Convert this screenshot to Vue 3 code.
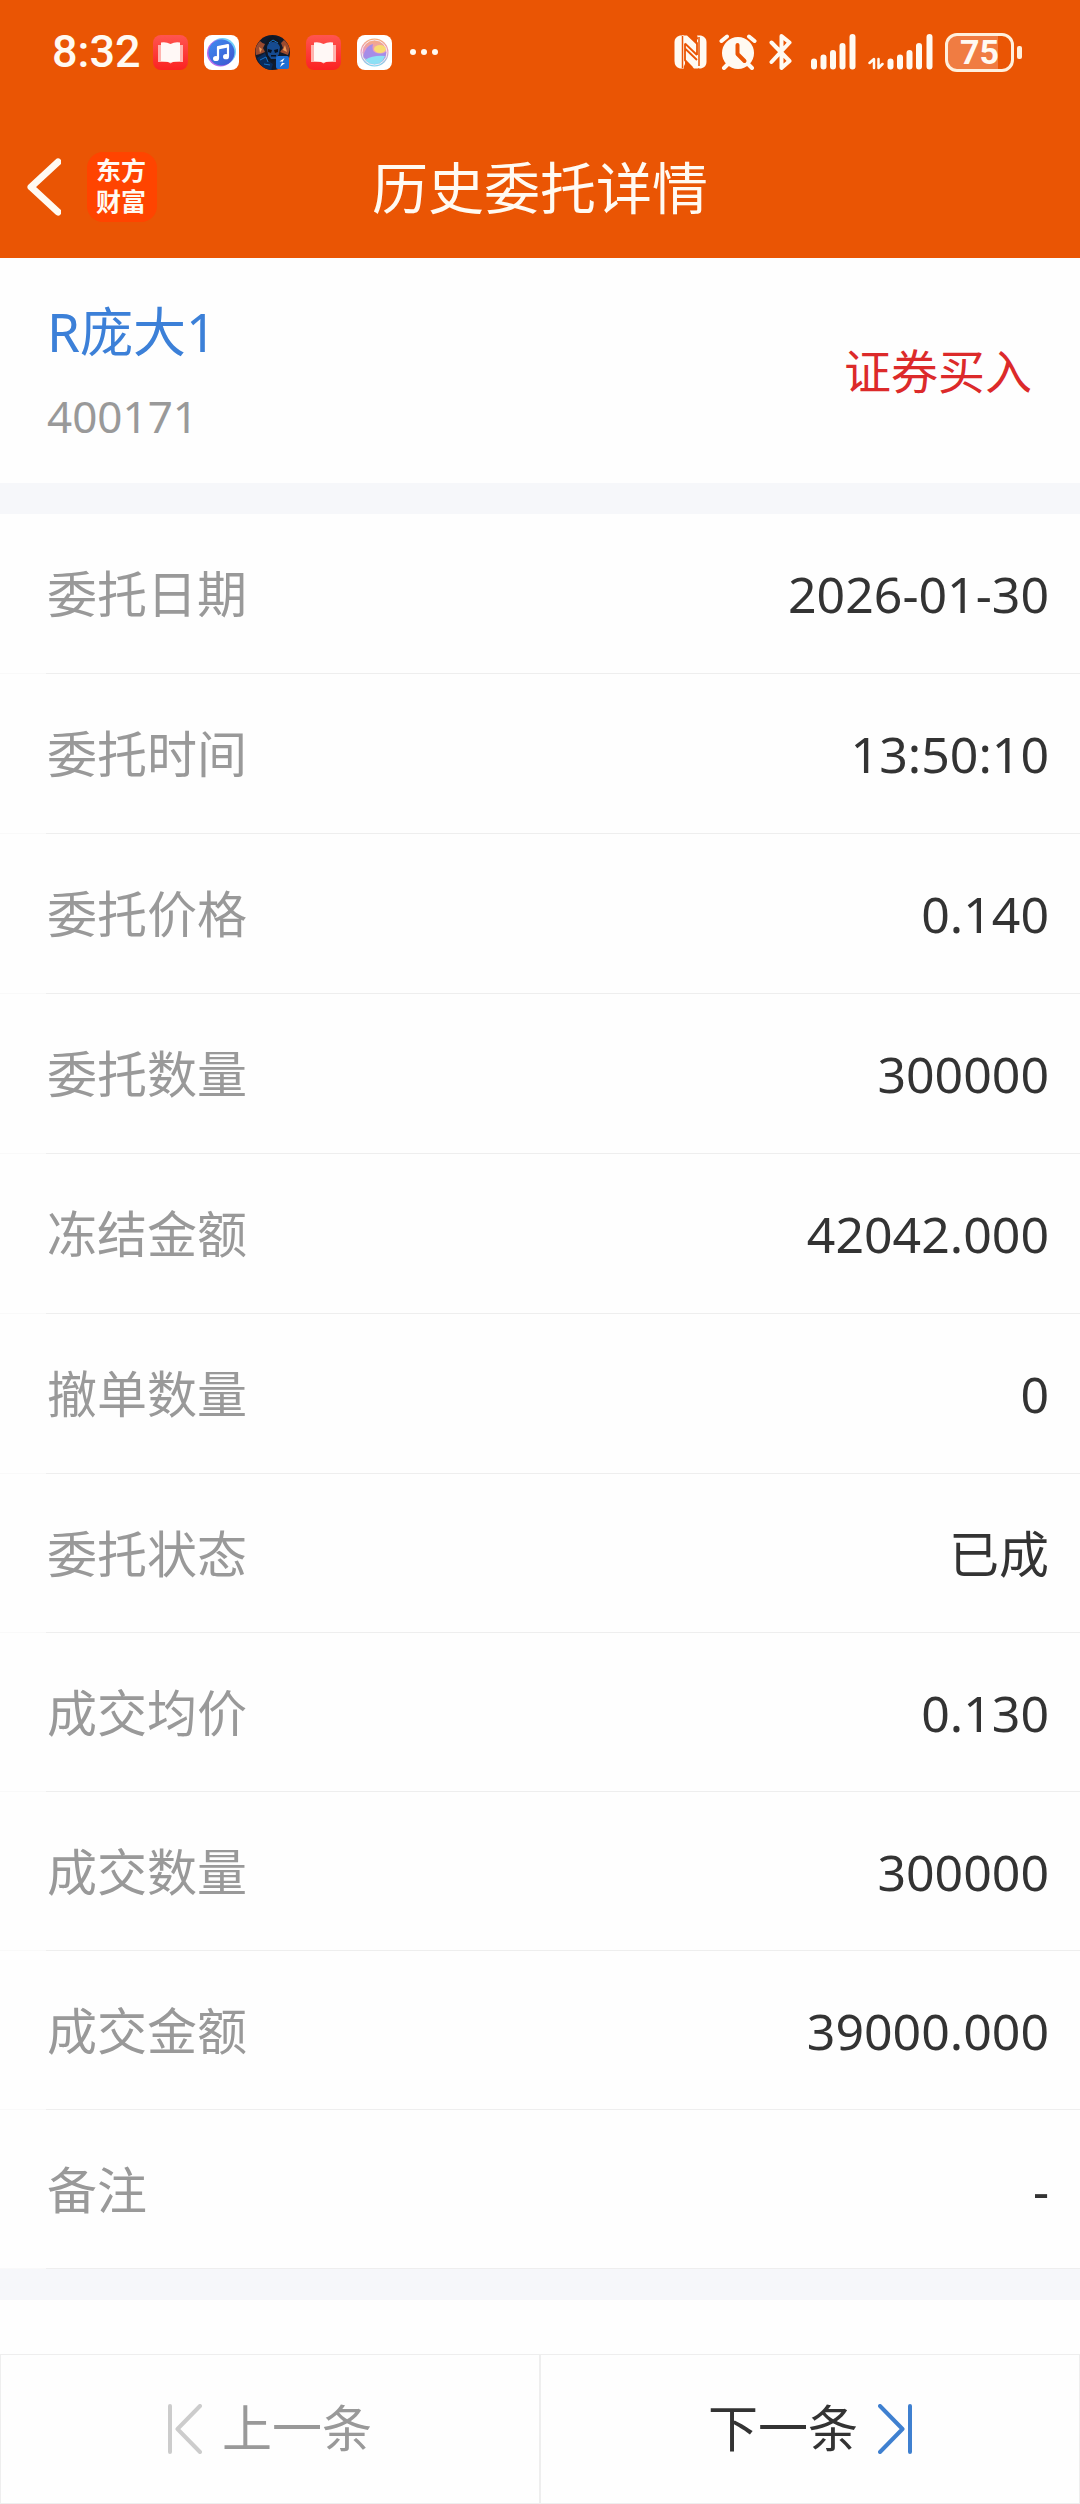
<script setup>

  import { ref } from 'vue';

  const stock = ref({
    name: 'R庞大1',
    code: '400171',
    side: '证券买入'
  })

  const details = ref([
    { label: '委托日期', value: '2026-01-30' },
    { label: '委托时间', value: '13:50:10' },
    { label: '委托价格', value: '0.140' },
    { label: '委托数量', value: '300000' },
    { label: '冻结金额', value: '42042.000' },
    { label: '撤单数量', value: '0' },
    { label: '委托状态', value: '已成' },
    { label: '成交均价', value: '0.130' },
    { label: '成交数量', value: '300000' },
    { label: '成交金额', value: '39000.000' },
    { label: '备注', value: '-' },
  ])

</script>

<template>

  <div class="page">

    <header class="top">

      <div class="status-bar">
        <div class="status-left">
          <span class="time">8:32</span>

          <div class="apps">
            <svg class="app" viewBox="0 0 35 35">
              <defs>
                <linearGradient id="book" x1="0" y1="0" x2="0" y2="1">
                  <stop offset="0" stop-color="#ff5550" />
                  <stop offset="1" stop-color="#fb2222" />
                </linearGradient>
              </defs>
              <rect width="35" height="35" rx="8" fill="url(#book)" />
              <path d="M5 10h3v16h19V10h3v17H20l-2.500 1.500L15 27H5z" fill="#ffb3ae" />
              <path d="M8 7.500q5-1 9.500 1.500Q22 6.500 27 7.500V26q-5 0-9.500 1.500Q13 26 8 26z" fill="#fff8f6" />
            </svg>

            <svg class="app" viewBox="0 0 35 35">
              <defs>
                <linearGradient id="music" x1="0" y1="0" x2="1" y2="1">
                  <stop offset="0" stop-color="#3f8cf0" />
                  <stop offset="1" stop-color="#3d56cf" />
                </linearGradient>
              </defs>
              <rect width="35" height="35" rx="8" fill="#fff" />
              <circle cx="18.500" cy="16.500" r="13.500" fill="#6fd0fa" />
              <circle cx="16.500" cy="18" r="13.500" fill="#b869ec" />
              <circle cx="17.500" cy="17.500" r="13" fill="url(#music)" />
              <path d="M14 23.500V12l10-2v11.500" fill="none" stroke="#fff" stroke-width="2.200" stroke-linejoin="round" />
              <path d="M14 11.500l10-2v3l-10 2z" fill="#fff" />
              <ellipse cx="12" cy="23.500" rx="3" ry="2.600" fill="#fff" />
              <ellipse cx="22" cy="21.700" rx="3" ry="2.600" fill="#fff" />
            </svg>

            <svg class="app" viewBox="0 0 35 35">
              <circle cx="17.500" cy="17.500" r="17.500" fill="#101a2c" />
              <path d="M5 6q3 3 5 3l-2 4 2 4-5 2-4 1Q-1 12 5 6zM29 5l-3 3 2 5-3 4 8 3Q37 12 29 5z" fill="#9c4b2f" />
              <path d="M4 12l3 2-2 4zM30 10l-2 5 4 2z" fill="#f09a55" />
              <path d="M10 13q1-11 8-12 7 2 8 12l-2 9-6 5-6-5z" fill="#111722" />
              <path d="M12 12q1-5 6-5t7 5l-1 7-3 5h-5l-3-4z" fill="#164b91" />
              <path d="M13 14l4 1-1 3-3-1zM23 14l-4 1 1 3 3-1zM16 20h5v1.500h-5z" fill="#071020" />
              <path d="M2 23l8-5 3 8 5 3-2 6Q6 34 2 23z" fill="#092b5b" />
              <path d="M5 25l6-3 2 5M14 8l4-3 5 3M9 29l6 1" fill="none" stroke="#1674c9" />
              <rect x="21" y="21" width="13" height="13" rx="2" fill="#1d6ed2" />
              <path d="M29.500 23l-5 3.500h3L25 32l5-4h-3z" fill="#fff" />
            </svg>

            <svg class="app" viewBox="0 0 35 35">
              <rect width="35" height="35" rx="8" fill="url(#book)" />
              <path d="M5 10h3v16h19V10h3v17H20l-2.500 1.500L15 27H5z" fill="#ffb3ae" />
              <path d="M8 7.500q5-1 9.500 1.500Q22 6.500 27 7.500V26q-5 0-9.500 1.500Q13 26 8 26z" fill="#fff8f6" />
            </svg>

            <svg class="app" viewBox="0 0 35 35">
              <defs>
                <linearGradient id="ball" x1="0.500" y1="0" x2="0.500" y2="1">
                  <stop offset="0" stop-color="#f7ad75" />
                  <stop offset="0.450" stop-color="#e79bc4" />
                  <stop offset="1" stop-color="#7ad6f2" />
                </linearGradient>
              </defs>
              <rect width="35" height="35" rx="8" fill="#fff" />
              <circle cx="17.500" cy="17.500" r="14" fill="url(#ball)" />
              <path d="M6 22q3-12 10-13-2 7 3 9 6 2 10-1 1 4-3 8-9 4-20-3z" fill="#a58ce8" />
              <path d="M8 25q8-5 20-4-3 8-10 8-7 0-10-4z" fill="#8ce0f5" />
              <ellipse cx="23" cy="14" rx="6" ry="4" fill="#f8dc72" />
              <circle cx="17.500" cy="17.500" r="12.500" fill="none" stroke="#f6eaf3" />
            </svg>
          </div>

          <svg class="dots" viewBox="0 0 28 8" fill="#fffaf2">
            <circle cx="3" cy="4" r="3" />
            <circle cx="14" cy="4" r="3" />
            <circle cx="25" cy="4" r="3" />
          </svg>
        </div>

        <div class="status-right">
          <svg width="33" height="34" viewBox="0 0 33 34">
            <path d="M6 .5H10L8 8v18l2 7.500H6Q.5 32 .5 26V7Q.5 2 6 .5zM23 .5h4Q32.500 2 32.500 7v20q0 5-5.500 6.500h-2L26 26V8z" fill="#fffaf2" />
            <path d="M8 .5h5L23 10V5l3-4v31.500L24 33.500h-4L11 24v5l-2 4H7.500z" fill="#fffaf2" />
            <path d="M8.500 1v32M25 2v29" stroke="#ea5504" stroke-width="1.500" />
            <path d="M11 8.500l12 11.500M11 13.500l12 11.500M11 8.500v17l7 7M16 0l7 8v12" fill="none" stroke="#ea5504" stroke-width="1.800" />
          </svg>

          <svg width="38" height="36" viewBox="0 0 38 36">
            <circle cx="19" cy="19" r="16" fill="#fffaf2" />
            <path d="M2.500 7L8 2.500M35.500 7L30 2.500M9 30l-4 4M29 30l4 4" stroke="#fffaf2" stroke-width="4" stroke-linecap="round" />
            <path d="M18.500 11v9l7 7" fill="none" stroke="#ea5504" stroke-width="4" stroke-linecap="round" stroke-linejoin="round" />
          </svg>

          <svg width="24" height="38" viewBox="0 0 24 38">
            <path d="M2.500 9.500L20.500 28 12.500 35V3l8 6.500L2.500 29" fill="none" stroke="#fffaf2" stroke-width="4" stroke-linecap="round" stroke-linejoin="round" />
          </svg>

          <svg class="signal" width="45" height="36" viewBox="0 0 45 36">
            <path d="M3 27.500v5M12.500 23.500v9M22 19v13.500M31.500 12v20.500M41.500 3v29.500" stroke="#fffaf2" stroke-width="6" stroke-linecap="round" />
          </svg>

          <svg class="signal-data" width="65" height="36" viewBox="0 0 65 36">
            <path d="M22.500 27.500v5M32 23.500v9M41.500 19v13.500M51 12v20.500M61.500 3v29.500" stroke="#fffaf2" stroke-width="6" stroke-linecap="round" />
            <path d="M1.500 29L6 25v9M10.500 25v9l4-4" fill="none" stroke="#fffaf2" stroke-width="2.500" stroke-linecap="round" stroke-linejoin="round" />
          </svg>

          <div class="battery">
            <div class="battery-body">
              <span>75</span>
            </div>
            <div class="battery-tip"></div>
          </div>
        </div>
      </div>

      <div class="nav-bar">
        <div class="nav-left">
          <button class="back" type="button" aria-label="返回">
            <svg width="34" height="58" viewBox="0 0 34 58">
              <path d="M31 4L4 29l27 25" fill="none" stroke="#fffaf2" stroke-width="7" stroke-linecap="round" stroke-linejoin="round" />
            </svg>
          </button>
          <div class="logo">东方<br>财富</div>
        </div>
        <h1>历史委托详情</h1>
      </div>

    </header>

    <section class="stock">
      <div class="stock-info">
        <a href="#" class="stock-name">{{ stock.name }}</a>
        <span class="stock-code">{{ stock.code }}</span>
      </div>
      <span class="stock-side">{{ stock.side }}</span>
    </section>

    <dl class="details">
      <div class="row" v-for="item in details" :key="item.label">
        <dt>{{ item.label }}</dt>
        <dd>{{ item.value }}</dd>
      </div>
    </dl>

    <footer class="pager">
      <button class="prev" type="button">
        <svg width="34" height="50" viewBox="0 0 34 50">
          <path d="M2 2v46M32 2L9.500 25 32 48" fill="none" stroke="#ccc" stroke-width="4" stroke-linecap="round" stroke-linejoin="round" />
        </svg>
        <span>上一条</span>
      </button>
      <button class="next" type="button">
        <span>下一条</span>
        <svg width="34" height="50" viewBox="0 0 34 50">
          <path d="M32 2v46M2 2l22.500 23L2 48" fill="none" stroke="#3f80d0" stroke-width="4" stroke-linecap="round" stroke-linejoin="round" />
        </svg>
      </button>
    </footer>

  </div>
</template>

<style>
  body {
    margin: 0;
    background-color: #fefefe;
  }
</style>

<style scoped>

  .page {
    display: flex;
    flex-direction: column;
    min-height: 100vh;
    font-family: "Noto Sans", "Noto Sans CJK SC", sans-serif;
    color: #333;
    background-color: #fefefe;
  }

  .top {
    background-color: #ea5504;
    color: #fffaf2;
  }

  .status-bar {
    display: flex;
    justify-content: space-between;
    align-items: center;
    height: 104px;
    padding: 0 58px 0 52px;
  }

  .status-left, .status-right, .apps, .battery {
    display: flex;
    align-items: center;
  }

  .status-left {
    gap: 12px;
  }

  .time {
    font-family: Roboto, sans-serif;
    font-size: 45px;
    font-weight: 500;
    line-height: 56px;
  }

  .apps {
    gap: 16px;
  }

  .app {
    width: 35px;
    height: 35px;
  }

  .dots {
    width: 28px;
    height: 8px;
    margin-left: 6px;
  }

  .status-right {
    gap: 12px;
  }

  .signal {
    margin-left: 6px;
  }

  .battery {
    gap: 3px;
  }

  .battery-body {
    box-sizing: border-box;
    display: flex;
    align-items: center;
    justify-content: center;
    width: 69px;
    height: 39px;
    border: 3px solid #fff0dd;
    border-radius: 12px;
    background: linear-gradient(90deg, #f07c42 80%, transparent 80%);

      & span {
        font-family: Roboto, sans-serif;
        font-size: 34px;
        font-weight: 700;
        line-height: 34px;
      }
  }

  .battery-tip {
    width: 5px;
    height: 13px;
    border-radius: 2px;
    background-color: #fff0dd;
  }

  .nav-bar {
    display: grid;
    grid-template-columns: 1fr auto 1fr;
    align-items: center;
    padding: 42px 27px 30px;

      & h1 {
        margin: 0;
        font-size: 56px;
        font-weight: 400;
        line-height: 82px;
      }
  }

  .nav-left {
    display: flex;
    align-items: center;
    gap: 26px;
  }

  button {
    font-family: inherit;
    border: none;
    background: none;
    cursor: pointer;
  }

  .back {
    display: flex;
    padding: 0;
  }

  .logo {
    box-sizing: border-box;
    width: 70px;
    height: 70px;
    padding: 2px 2px 0 0;
    border-radius: 16px;
    background-color: #ff4400;
    font-family: "Noto Sans CJK SC", sans-serif;
    font-size: 25px;
    font-weight: 700;
    line-height: 31px;
    text-align: center;
  }

  .stock {
    display: flex;
    justify-content: space-between;
    align-items: center;
    padding: 34px 48px 34px 47px;
    border-bottom: 31px solid #f6f7fa;
  }

  .stock-info {
    display: flex;
    flex-direction: column;
    gap: 11px;
  }

  .stock-name {
    font-size: 53px;
    line-height: 80px;
    color: #3c80d8;
    text-decoration: none;
  }

  .stock-code {
    font-size: 44px;
    line-height: 66px;
    color: #999;
  }

  .stock-side {
    font-size: 47px;
    line-height: 66px;
    color: #dc2a2a;
  }

  .details {
    margin: 0;
    border-bottom: 31px solid #f6f7fa;
  }

  .row {
    display: flex;
    justify-content: space-between;
    align-items: center;
    box-sizing: border-box;
    min-height: 160px;
    padding: 1px 31px 0 47px;
    border-bottom: 1px solid;
    border-image: linear-gradient(90deg, #f9f9f9 47px, #eee 47px) 1;
    font-size: 50px;
    line-height: 80px;

      &:nth-child(n + 7) {
        min-height: 159px;
      }

      & dt {
        color: #999;
      }

      & dd {
        margin: 0;
      }
  }

  .pager {
    display: flex;
    margin-top: auto;

      & button {
        display: flex;
        flex: 1;
        align-items: center;
        justify-content: center;
        gap: 20px;
        height: 150px;
        padding: 0;
        border: 1px solid #eee;
        font-size: 50px;
        line-height: 80px;
        color: #333;
      }

      & span {
        padding-bottom: 2px;
      }

      & .prev {
        color: #999;
      }
  }
</style>
